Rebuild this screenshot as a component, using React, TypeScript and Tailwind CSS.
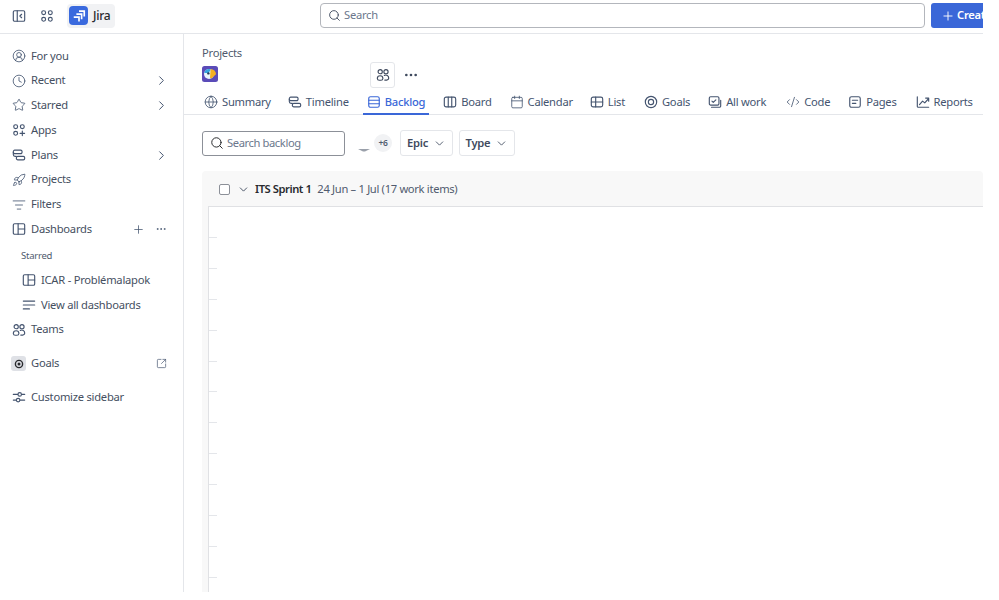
import {
  ChevronDown,
  ChevronRight,
  CircleUserRound,
  Clock,
  CodeXml,
  Ellipsis,
  Globe,
  Plus,
  Search,
  Star,
  Rocket,
  SquareArrowOutUpRight,
  ListFilter,
  Calendar,
} from "lucide-react";
import type { ReactNode } from "react";

const stroke = {
  fill: "none",
  stroke: "currentColor",
  strokeWidth: 1.3,
  strokeLinecap: "round" as const,
  strokeLinejoin: "round" as const,
};

function Ic({ children, size = 14 }: { children: ReactNode; size?: number }) {
  return (
    <svg width={size} height={size} viewBox="0 0 16 16" className="shrink-0" {...stroke}>
      {children}
    </svg>
  );
}

const SidebarToggle = () => (
  <Ic>
    <rect x="1.5" y="2" width="13" height="12" rx="1.5" />
    <path d="M6 2v12M11 6l-2 2 2 2" />
  </Ic>
);
const AppsIcon = () => (
  <Ic>
    <circle cx="4.2" cy="4.2" r="2.2" />
    <circle cx="11.8" cy="4.2" r="2.2" />
    <circle cx="4.2" cy="11.8" r="2.2" />
    <circle cx="11.8" cy="11.8" r="2.2" />
  </Ic>
);
const AppsPlus = () => (
  <Ic>
    <circle cx="4.2" cy="4.2" r="2.2" />
    <circle cx="11.8" cy="4.2" r="2.2" />
    <circle cx="4.2" cy="11.8" r="2.2" />
    <path d="M11.8 9.2v5.2M9.2 11.8h5.2" />
  </Ic>
);
const PlansIcon = () => (
  <Ic>
    <rect x="1.5" y="2.5" width="10" height="4" rx="1.6" />
    <rect x="5" y="9.5" width="9.5" height="4" rx="1.6" />
    <path d="M1.5 5v2.5a2 2 0 0 0 2 2H5" />
  </Ic>
);
const DashIcon = () => (
  <Ic>
    <rect x="1.5" y="2" width="13" height="12" rx="1.5" />
    <path d="M7 2v12M7 8h7.5" />
  </Ic>
);
const LinesIcon = () => (
  <Ic>
    <path d="M1.5 3.5h13M1.5 8h13M1.5 12.5h7" />
  </Ic>
);
const BacklogIcon = () => (
  <Ic>
    <rect x="2" y="2" width="12" height="12" rx="2" />
    <path d="M2 6h12M2 10h12" />
  </Ic>
);
const BoardIcon = () => (
  <Ic>
    <rect x="1.5" y="2.5" width="13" height="11" rx="2" />
    <path d="M6 2.5v11M10 2.5v11" />
  </Ic>
);
const ListIcon = () => (
  <Ic>
    <rect x="1.5" y="2.5" width="13" height="11" rx="2" />
    <path d="M1.5 8h13M6.5 2.5v11" />
  </Ic>
);
const GoalIcon = () => (
  <Ic>
    <circle cx="8" cy="8" r="6.5" />
    <circle cx="8" cy="8" r="3" />
  </Ic>
);
const AllWorkIcon = () => (
  <Ic>
    <rect x="1.5" y="2" width="11" height="9.5" rx="1.5" />
    <path d="M4.5 7l1.5 1.5 3-3M14.5 6v6.5a1.5 1.5 0 0 1-1.5 1.5H4" />
  </Ic>
);
const PagesIcon = () => (
  <Ic>
    <rect x="2" y="2" width="12" height="12" rx="2" />
    <path d="M5 6h6M5 9.5h4" />
  </Ic>
);
const ReportsIcon = () => (
  <Ic>
    <path d="M1.5 2v11a1 1 0 0 0 1 1h12" />
    <path d="M4 11l3.5-4 2.5 2 4.5-5M11 3.5h3.5V7" />
  </Ic>
);
const TeamIcon = () => (
  <Ic>
    <circle cx="4.8" cy="4.2" r="2.4" />
    <circle cx="11.4" cy="4.2" r="2.4" />
    <path d="M1.5 12a3.2 3.2 0 0 1 6.4 0 2.2 2.2 0 0 1-2.2 2H3.7a2.2 2.2 0 0 1-2.2-2z" />
    <path d="M9.5 8.6a3.2 3.2 0 0 1 5 2.8 2.2 2.2 0 0 1-2.2 2.4H10" />
  </Ic>
);
const CustomizeIcon = () => (
  <Ic>
    <path d="M1.5 5h5M11 5h3.5M1.5 11.5h3M9.5 11.5h5" />
    <circle cx="8.8" cy="5" r="2" />
    <circle cx="7" cy="11.5" r="2" />
  </Ic>
);

const Jira = () => (
  <span className="flex h-[19px] w-[19px] items-center justify-center rounded-[4px] bg-[#3a6ade]">
    <svg width="14" height="14" viewBox="0 0 16 16" fill="none" stroke="white" strokeWidth="1.9">
      <path d="M8 2.5h6v6" />
      <path d="M5 5.8h6v6" />
      <path d="M2 9.2h6v5" />
    </svg>
  </span>
);

const Parrot = () => (
  <svg width="16" height="16" viewBox="0 0 16 16" className="mb-[2px] shrink-0">
    <rect width="16" height="16" rx="2.5" fill="#5a4bb8" />
    <circle cx="7" cy="8" r="5" fill="#e8f5fb" />
    <path d="M2.2 7A5 5 0 0 1 7 3a4 4 0 0 1 2 .5L6.5 7z" fill="#35a6de" />
    <path d="M8.5 3.4a5 5 0 0 1 5.5 4.8L9.5 12.5 8 12z" fill="#f5b021" />
    <circle cx="6.4" cy="7.4" r="1.2" fill="#253858" />
  </svg>
);

function NavRow({
  icon,
  label,
  right,
  indent = false,
}: {
  icon: ReactNode;
  label: string;
  right?: ReactNode;
  indent?: boolean;
}) {
  return (
    <div className={`flex h-[24.8px] items-center pr-[14px] text-[#44546f] ${indent ? "pl-[22px]" : "pl-[12px]"}`}>
      <span className="flex w-[19px] shrink-0 items-center">{icon}</span>
      <span className="flex-1 text-[#454f5f]">{label}</span>
      {right}
    </div>
  );
}

const More = <ChevronRight size={15} strokeWidth={1.6} className="text-[#44546f]" />;

const tabs: { label: string; icon: ReactNode; active?: boolean; extra?: string }[] = [
  { label: "Summary", icon: <Globe size={14} strokeWidth={1.4} /> },
  { label: "Timeline", icon: <PlansIcon />, extra: "-ml-[1px]" },
  { label: "Backlog", icon: <BacklogIcon />, active: true },
  { label: "Board", icon: <BoardIcon /> },
  { label: "Calendar", icon: <Calendar size={14} strokeWidth={1.4} /> },
  { label: "List", icon: <ListIcon />, extra: "-ml-[1px]" },
  { label: "Goals", icon: <GoalIcon />, extra: "ml-[1px]" },
  { label: "All work", icon: <AllWorkIcon /> },
  { label: "Code", icon: <CodeXml size={14} strokeWidth={1.4} />, extra: "ml-[2px]" },
  { label: "Pages", icon: <PagesIcon /> },
  { label: "Reports", icon: <ReportsIcon />, extra: "ml-[1px]" },
];

function FilterButton({ label, width }: { label: string; width: string }) {
  return (
    <div className={`flex h-[26px] items-center justify-center gap-[5px] rounded-[3px] border border-[#e4e6ea] font-semibold text-[#3f4a5e] ${width}`}>
      {label}
      <ChevronDown size={13} strokeWidth={1.6} />
    </div>
  );
}

const ticks = Array.from({ length: 12 }, (_, i) => i);

export default function App() {
  return (
    <div className="h-[600px] w-[999px] overflow-hidden bg-white font-['Noto_Sans',sans-serif] text-[11.2px] tracking-[-0.25px] text-[#44546f]">
      <div className="flex h-[592px] w-[983px] flex-col overflow-hidden">
        {/* top bar */}
        <header className="flex h-[34px] shrink-0 items-center border-b border-[#e4e6ea] pb-[2px] pl-[12px]">
          <span className="flex w-[28px]"><SidebarToggle /></span>
          <span className="flex w-[27px]"><AppsIcon /></span>
          <div className="flex h-[24px] w-[48px] items-center gap-[5px] rounded-[4px] bg-[#f1f2f4] pl-[2px] text-[12px] font-medium text-[#292a2e]">
            <Jira />
            Jira
          </div>
          <div className="ml-[205px] flex h-[25px] w-[605px] items-center gap-[3px] rounded-[4px] border border-[#b3b6bc] pl-[7px] text-[#6b778c]">
            <Search size={13} strokeWidth={1.7} className="text-[#3f4a5e]" />
            Search
          </div>
          <div className="ml-[6px] flex h-[25px] min-w-0 flex-1 items-center gap-[2px] overflow-hidden rounded-l-[3px] bg-[#3a67d8] pl-[10px] font-semibold whitespace-nowrap text-white">
            <Plus size={14} strokeWidth={1.6} className="shrink-0" />
            Create
          </div>
        </header>

        <div className="flex min-h-0 flex-1">
          {/* sidebar */}
          <aside className="w-[184px] shrink-0 border-r border-[#e4e6ea] pt-[9.5px]">
            <NavRow icon={<CircleUserRound size={14} strokeWidth={1.4} />} label="For you" />
            <NavRow icon={<Clock size={14} strokeWidth={1.4} />} label="Recent" right={More} />
            <NavRow icon={<Star size={14} strokeWidth={1.4} />} label="Starred" right={More} />
            <NavRow icon={<AppsPlus />} label="Apps" />
            <NavRow icon={<PlansIcon />} label="Plans" right={More} />
            <NavRow icon={<Rocket size={14} strokeWidth={1.4} />} label="Projects" />
            <NavRow icon={<ListFilter size={14} strokeWidth={1.4} />} label="Filters" />
            <NavRow
              icon={<DashIcon />}
              label="Dashboards"
              right={
                <span className="flex items-center gap-[10px] pr-[2px]">
                  <Plus size={13} strokeWidth={1.4} />
                  <Ellipsis size={12} strokeWidth={1.6} />
                </span>
              }
            />
            <div className="flex h-[26px] items-center pt-[2px] pl-[21px] text-[9.5px] text-[#505b6e]">Starred</div>
            <NavRow indent icon={<DashIcon />} label="ICAR - Problémalapok" />
            <NavRow indent icon={<LinesIcon />} label="View all dashboards" />
            <NavRow icon={<TeamIcon />} label="Teams" />
            <div className="mt-[9px]">
              <NavRow
                icon={
                  <span className="-ml-[1px] flex h-[15px] w-[15px] items-center justify-center rounded-[3px] bg-[#dfe1e6] text-[#292a2e]">
                    <svg width="10" height="10" viewBox="0 0 10 10">
                      <circle cx="5" cy="5" r="3.6" fill="none" stroke="currentColor" strokeWidth="1.4" />
                      <circle cx="5" cy="5" r="1.5" fill="currentColor" />
                    </svg>
                  </span>
                }
                label="Goals"
                right={<SquareArrowOutUpRight size={11} strokeWidth={1.5} className="mr-[2px]" />}
              />
            </div>
            <div className="mt-[9px]">
              <NavRow icon={<CustomizeIcon />} label="Customize sidebar" />
            </div>
          </aside>

          {/* main */}
          <main className="flex min-w-0 flex-1 flex-col">
            <div className="h-[81px] shrink-0 border-b border-[#e4e6ea] pl-[18px]">
              <div className="flex h-[28px] items-end text-[#505b6e]">Projects</div>
              <div className="-mt-[1px] flex h-[28px] items-center">
                <Parrot />
                <div className="ml-[152px] flex h-[26px] w-[25px] items-center justify-center rounded-[3px] border border-[#e4e6ea] text-[#3f4a5e]">
                  <TeamIcon />
                </div>
                <Ellipsis size={16} strokeWidth={2} className="ml-[8px] text-[#3f4a5e]" />
              </div>
              <nav className="-ml-[2px] flex h-[26px] items-stretch gap-[10px] pt-[2px]">
                {tabs.map((t) => (
                  <div
                    key={t.label}
                    className={`flex items-center gap-[4px] border-b-2 px-[4px] whitespace-nowrap ${t.extra ?? ""} ${
                      t.active ? "border-[#3a67d8] font-medium text-[#3a67d8]" : "border-transparent text-[#44546f]"
                    }`}
                  >
                    {t.icon}
                    {t.label}
                  </div>
                ))}
              </nav>
            </div>

            <div className="flex h-[56px] shrink-0 items-center pl-[18px]">
              <div className="flex h-[25px] w-[143px] items-center gap-[3px] rounded-[3px] border border-[#8c9098] pl-[7px] tracking-[-0.4px] text-[#6b778c]">
                <Search size={14} strokeWidth={1.7} className="text-[#292a2e]" />
                Search backlog
              </div>
              <svg width="12" height="4" viewBox="0 0 12 4" className="mt-[13px] ml-[13px] shrink-0">
                <path d="M0 1h12L7 3.5H5z" fill="#9aa0aa" />
              </svg>
              <span className="ml-[4px] flex h-[18px] w-[18px] items-center justify-center rounded-full bg-[#f1f2f4] text-[8.5px] font-semibold text-[#505b6e]">
                +6
              </span>
              <div className="ml-[8px] flex gap-[6px]">
                <FilterButton label="Epic" width="w-[53px]" />
                <FilterButton label="Type" width="w-[56px]" />
              </div>
            </div>

            {/* sprint panel */}
            <section className="ml-[18px] flex min-h-0 flex-1 flex-col rounded-t-[4px] bg-[#f8f8f8] pl-[6px]">
              <div className="flex h-[35px] shrink-0 items-center pt-[2px] pl-[11px]">
                <span className="h-[11px] w-[11px] rounded-[2px] border border-[#8c9098] bg-white" />
                <ChevronDown size={13} strokeWidth={1.7} className="ml-[7px] text-[#3f4a5e]" />
                <span className="ml-[5px] font-semibold tracking-[-0.45px] text-[#292a2e]">ITS Sprint 1</span>
                <span className="ml-[6px] tracking-[-0.32px] text-[#505b6e]">24 Jun – 1 Jul (17 work items)</span>
              </div>
              <div className="min-h-0 flex-1 border-t border-l border-[#e0e1e4] bg-white pt-[30px]">
                {ticks.map((i) => (
                  <div key={i} className="mb-[29.9px] h-px w-[8px] bg-[#e4e6ea]" />
                ))}
              </div>
            </section>
          </main>
        </div>
      </div>
    </div>
  );
}
